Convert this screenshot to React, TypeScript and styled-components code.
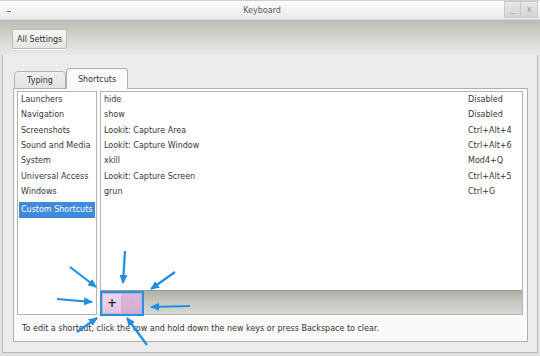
import React from "react";
import styled, { createGlobalStyle } from "styled-components";

const Global = createGlobalStyle`
  html, body { margin: 0; padding: 0; background: #e4e4e4; }
  body { font-family: "DejaVu Sans", "Liberation Sans", sans-serif; font-size: 8px; color: #363636; }
  * { box-sizing: border-box; }
`;

const Window = styled.div`
  position: relative;
  width: 540px;
  height: 356px;
  overflow: hidden;
  display: flex;
  flex-direction: column;
  background: #e2e2e2;
`;

const TitleBar = styled.div`
  flex: none;
  height: 20px;
  display: grid;
  grid-template-columns: 20px 1fr auto;
  align-items: center;
  background: linear-gradient(#fbfbfb, #ebebeb);
  border-top: 1px solid #d0d0d0;
  border-bottom: 1px solid #d8d8d8;
`;

const MenuGlyph = styled.span`
  justify-self: start;
  margin: 2px 0 0 7px;
  width: 4px;
  height: 1px;
  background: #707070;
`;

const Title = styled.span`
  text-align: center;
  color: #5a5a5a;
  font-size: 8px;
`;

const WinButtons = styled.div`
  display: flex;
  align-self: start;
  margin-right: 2px;
`;

const WinButton = styled.div`
  width: 17px;
  height: 17px;
  display: flex;
  align-items: center;
  justify-content: center;
  border: 1px solid #cacaca;
  background: linear-gradient(#e6e6e6, #d4d4d4);
  color: #9a9a9a;
  font-size: 8px;
  & + & { border-left: none; }
`;

const Toolbar = styled.div`
  flex: none;
  height: 35px;
  display: flex;
  align-items: center;
  padding-left: 12px;
  padding-top: 3px;
  background: linear-gradient(#bbbbb3 0%, #d0d0ca 40%, #e3e3e0 85%, #e8e8e6 100%);
`;

const SettingsButton = styled.div`
  height: 20px;
  padding: 0 4px;
  display: flex;
  align-items: center;
  border: 1px solid #bcbcb4;
  border-radius: 2px;
  background: linear-gradient(#f6f6f4, #e4e4e0);
  color: #333;
  font-size: 8px;
  box-shadow: 0 1px 0 rgba(255,255,255,0.6);
`;

const Body = styled.div`
  flex: 1;
  margin: 0 2px 3px 2px;
  border: 1px solid #b8b8b8;
  border-top: none;
  background: #ececec;
  display: flex;
  flex-direction: column;
  padding: 13px 9px 10px 10px;
`;

const TabRow = styled.div`
  display: flex;
  align-items: flex-end;
  height: 21px;
  margin-left: 1px;
  margin-bottom: -1px;
  position: relative;
  z-index: 1;
`;

const Tab = styled.div<{ $active?: boolean; $w: number }>`
  width: ${p => p.$w}px;
  height: ${p => (p.$active ? 21 : 18)}px;
  display: flex;
  align-items: center;
  justify-content: center;
  border: 1px solid #b0b0b0;
  border-bottom: ${p => (p.$active ? "none" : "1px solid #b0b0b0")};
  border-radius: 4px 4px 0 0;
  background: ${p => (p.$active ? "#fafafa" : "linear-gradient(#f0f0f0, #e2e2e2)")};
  color: #333;
  font-size: 8px;
  padding-top: ${p => (p.$active ? 0 : 1)}px;
`;

const Panel = styled.div`
  flex: 1;
  border: 1px solid #b0b0b0;
  background: #fafafa;
  display: flex;
  flex-direction: column;
  padding: 2px 4px 0 3px;
`;

const Lists = styled.div`
  height: 224px;
  display: flex;
  gap: 3px;
`;

const CategoryList = styled.div`
  width: 80px;
  border: 1px solid #b4b4b4;
  background: #fff;
  display: flex;
  flex-direction: column;
`;

const Category = styled.div<{ $selected?: boolean }>`
  height: 15.33px;
  display: flex;
  align-items: center;
  white-space: nowrap;
  padding-left: ${p => (p.$selected ? 2 : 3)}px;
  margin: ${p => (p.$selected ? "3px 1px 0 1px" : "0")};
  background: ${p => (p.$selected ? "#3f8bd9" : "transparent")};
  color: ${p => (p.$selected ? "#fff" : "#363636")};
`;

const ShortcutPane = styled.div`
  flex: 1;
  border: 1px solid #b4b4b4;
  display: flex;
  flex-direction: column;
  background: #fff;
`;

const ShortcutRows = styled.div`
  flex: 1;
  display: flex;
  flex-direction: column;
`;

const ShortcutRow = styled.div`
  height: 15.33px;
  display: grid;
  grid-template-columns: 1fr 54px;
  align-items: center;
  padding-left: 3px;
  white-space: nowrap;
`;

const PaneToolbar = styled.div`
  height: 24px;
  border-top: 1px solid #9a9a92;
  background: linear-gradient(#b0b0a8 0%, #c6c6be 45%, #d8d8d4 100%);
  display: flex;
  align-items: center;
  padding-top: 1px;
`;

const ButtonGroup = styled.div`
  display: flex;
  outline: 2px solid #2592e4;
  outline-offset: 0px;
  margin-left: 1px;
`;

const ToolButton = styled.div<{ $dim?: boolean }>`
  width: 20px;
  height: 21px;
  display: flex;
  align-items: center;
  justify-content: center;
  background: ${p => (p.$dim ? "linear-gradient(#dab8d8, #d2aed0)" : "linear-gradient(#efd6ef, #e2c4e2)")};
  border: 1px solid ${p => (p.$dim ? "#c9a6c7" : "#cfaecf")};
  color: ${p => (p.$dim ? "#bf9fbf" : "#2a2a2a")};
  font-size: ${p => (p.$dim ? 9 : 12)}px;
  font-weight: ${p => (p.$dim ? 400 : 700)};
  & + & { border-left: none; }
`;

const HelpText = styled.div`
  flex: 1;
  display: flex;
  align-items: center;
  padding-left: 5px;
  padding-top: 1px;
  color: #333;
  white-space: nowrap;
`;

const Overlay = styled.svg`
  position: absolute;
  left: 0;
  top: 0;
  pointer-events: none;
`;

const categories = [
  "Launchers",
  "Navigation",
  "Screenshots",
  "Sound and Media",
  "System",
  "Universal Access",
  "Windows",
];

const shortcuts: [string, string][] = [
  ["hide", "Disabled"],
  ["show", "Disabled"],
  ["Lookit: Capture Area", "Ctrl+Alt+4"],
  ["Lookit: Capture Window", "Ctrl+Alt+6"],
  ["xkill", "Mod4+Q"],
  ["Lookit: Capture Screen", "Ctrl+Alt+5"],
  ["grun", "Ctrl+G"],
];

const arrows: [number, number, number, number][] = [
  [70, 267, 96, 287],
  [125, 251, 123, 283],
  [175, 272, 151, 289],
  [57, 299, 92, 302],
  [190, 306, 151, 307],
  [77, 332, 97, 318],
  [147, 345, 127, 318],
];

export default function App() {
  return (
    <>
      <Global />
      <Window>
        <TitleBar>
          <MenuGlyph />
          <Title>Keyboard</Title>
          <WinButtons>
            <WinButton>_</WinButton>
            <WinButton>x</WinButton>
          </WinButtons>
        </TitleBar>
        <Toolbar>
          <SettingsButton>All Settings</SettingsButton>
        </Toolbar>
        <Body>
          <TabRow>
            <Tab $w={52}>Typing</Tab>
            <Tab $w={62} $active>Shortcuts</Tab>
          </TabRow>
          <Panel>
            <Lists>
              <CategoryList>
                {categories.map(c => (
                  <Category key={c}>{c}</Category>
                ))}
                <Category $selected>Custom Shortcuts</Category>
              </CategoryList>
              <ShortcutPane>
                <ShortcutRows>
                  {shortcuts.map(([name, key]) => (
                    <ShortcutRow key={name}>
                      <span>{name}</span>
                      <span>{key}</span>
                    </ShortcutRow>
                  ))}
                </ShortcutRows>
                <PaneToolbar>
                  <ButtonGroup>
                    <ToolButton>+</ToolButton>
                    <ToolButton $dim>–</ToolButton>
                  </ButtonGroup>
                </PaneToolbar>
              </ShortcutPane>
            </Lists>
            <HelpText>
              To edit a shortcut, click the row and hold down the new keys or press Backspace to clear.
            </HelpText>
          </Panel>
        </Body>
        <Overlay width={540} height={356} viewBox="0 0 540 356">
          <defs>
            <marker
              id="ah"
              markerUnits="userSpaceOnUse"
              markerWidth="10"
              markerHeight="10"
              refX="8"
              refY="4"
              orient="auto"
            >
              <path d="M0,0 L9,4 L0,8 Z" fill="#1f8fe3" />
            </marker>
          </defs>
          {arrows.map(([x1, y1, x2, y2], i) => (
            <line
              key={i}
              x1={x1}
              y1={y1}
              x2={x2}
              y2={y2}
              stroke="#1f8fe3"
              strokeWidth={2.2}
              markerEnd="url(#ah)"
            />
          ))}
        </Overlay>
      </Window>
    </>
  );
}
